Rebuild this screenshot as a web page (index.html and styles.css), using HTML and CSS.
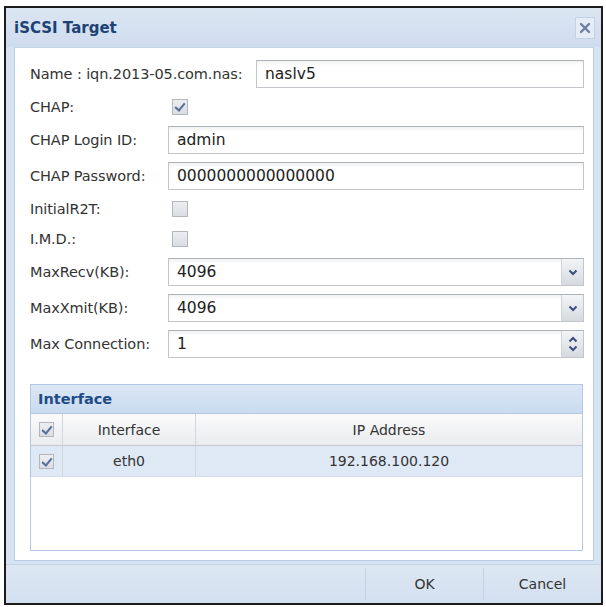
FILE: index.html
```html
<!DOCTYPE html>
<html lang="en">
<head>
    <meta charset="UTF-8">
    <title>iSCSI Target</title>
    <link rel="stylesheet" href="styles.css">
</head>
<body>
    <div class="dialog">
        <!-- Title bar -->
        <div class="titlebar">
            <span class="title">iSCSI Target</span>
            <span class="close">
                <svg width="12" height="12" viewBox="0 0 12 12"><path d="M2 2 L10 10 M10 2 L2 10" stroke="#6d7fa3" stroke-width="2.4" stroke-linecap="round"/></svg>
            </span>
        </div>

        <!-- Form body -->
        <div class="body">
            <div class="row">
                <label class="lbl lbl-wide">Name : iqn.2013-05.com.nas:</label>
                <div class="field">naslv5</div>
            </div>
            <div class="row check-row">
                <label class="lbl">CHAP:</label>
                <span class="cb checked"></span>
            </div>
            <div class="row">
                <label class="lbl">CHAP Login ID:</label>
                <div class="field">admin</div>
            </div>
            <div class="row">
                <label class="lbl">CHAP Password:</label>
                <div class="field">0000000000000000</div>
            </div>
            <div class="row check-row">
                <label class="lbl">InitialR2T:</label>
                <span class="cb"></span>
            </div>
            <div class="row check-row">
                <label class="lbl">I.M.D.:</label>
                <span class="cb"></span>
            </div>
            <div class="row">
                <label class="lbl">MaxRecv(KB):</label>
                <div class="field combo">
                    <span class="val">4096</span>
                    <span class="trigger">
                        <svg width="10" height="7" viewBox="0 0 10 7"><path d="M1.5 1.5 L5 5 L8.5 1.5" fill="none" stroke="#3c4f82" stroke-width="2"/></svg>
                    </span>
                </div>
            </div>
            <div class="row">
                <label class="lbl">MaxXmit(KB):</label>
                <div class="field combo">
                    <span class="val">4096</span>
                    <span class="trigger">
                        <svg width="10" height="7" viewBox="0 0 10 7"><path d="M1.5 1.5 L5 5 L8.5 1.5" fill="none" stroke="#3c4f82" stroke-width="2"/></svg>
                    </span>
                </div>
            </div>
            <div class="row">
                <label class="lbl">Max Connection:</label>
                <div class="field combo">
                    <span class="val">1</span>
                    <span class="spinner">
                        <svg width="10" height="7" viewBox="0 0 10 7"><path d="M1.5 5.5 L5 2 L8.5 5.5" fill="none" stroke="#3c4f82" stroke-width="2"/></svg>
                        <svg width="10" height="7" viewBox="0 0 10 7"><path d="M1.5 1.5 L5 5 L8.5 1.5" fill="none" stroke="#3c4f82" stroke-width="2"/></svg>
                    </span>
                </div>
            </div>

            <!-- Interface grid -->
            <div class="panel">
                <div class="panel-head">Interface</div>
                <div class="grid-row grid-head">
                    <div class="c-check"><span class="cb checked small"></span></div>
                    <div class="c-if">Interface</div>
                    <div class="c-ip">IP Address</div>
                </div>
                <div class="grid-row grid-sel">
                    <div class="c-check"><span class="cb checked small"></span></div>
                    <div class="c-if">eth0</div>
                    <div class="c-ip">192.168.100.120</div>
                </div>
            </div>
        </div>

        <!-- Buttons -->
        <div class="footer">
            <div class="btn">OK</div>
            <div class="btn">Cancel</div>
        </div>
    </div>
</body>
</html>
```

FILE: styles.css
```css
body {
    margin: 0;
    padding: 6px 3px 0 4px;
    background: #ffffff;
    font-family: 'DejaVu Sans', Verdana, sans-serif;
    font-size: 14.5px;
    color: #333333;
}

.dialog {
    width: 595px;
    height: 595px;
    border: 2px solid #1c1c1c;
    background: #d6e3f2;
    display: flex;
    flex-direction: column;
}

.titlebar {
    height: 39px;
    display: flex;
    align-items: center;
    justify-content: space-between;
    padding: 0 6px 0 8px;
    background: linear-gradient(#dbe6f3, #cfdcee);
}

.title {
    font-weight: bold;
    font-size: 15px;
    color: #1d4274;
}

.close {
    width: 18px;
    height: 20px;
    border: 1px solid #c3d2e5;
    background: #e4ecf6;
    display: flex;
    align-items: center;
    justify-content: center;
}

.body {
    flex: 1;
    margin: 0 7px 0 8px;
    background: #ffffff;
    border: 1px solid #b9cde5;
    border-top-color: #c7d7ea;
    padding: 8px 9px 0 15px;
}

.row {
    height: 36px;
    display: flex;
    align-items: center;
}

.check-row {
    height: 30px;
}

.lbl {
    width: 138px;
    flex-shrink: 0;
    letter-spacing: -0.1px;
}

.lbl-wide {
    width: 226px;
}

.field {
    flex: 1;
    height: 26px;
    line-height: 26px;
    border: 1px solid #c2c6cc;
    border-top-color: #aeb3ba;
    background: linear-gradient(#f2f2f2, #ffffff 5px);
    padding-left: 8px;
    color: #222222;
    font-size: 15.5px;
}

.combo {
    display: flex;
    padding-right: 0;
}

.combo .val {
    flex: 1;
}

.trigger,
.spinner {
    width: 21px;
    border-left: 1px solid #d0d4da;
    background: linear-gradient(#f3f4f6, #d6dae0);
    display: flex;
    flex-direction: column;
    align-items: center;
    justify-content: center;
    gap: 2px;
}

.cb {
    display: inline-block;
    width: 14px;
    height: 14px;
    margin-left: 4px;
    border: 1px solid #b3b7bd;
    background: linear-gradient(#eceef1, #dadde2);
    position: relative;
}

.cb.checked::after {
    content: "";
    position: absolute;
    left: 4px;
    top: 1px;
    width: 4px;
    height: 8px;
    border: solid #5a6c98;
    border-width: 0 2px 2px 0;
    transform: rotate(40deg);
}

.cb.small {
    width: 13px;
    height: 13px;
    margin-left: 0;
}

.panel {
    margin-top: 22px;
    margin-right: 1px;
    height: 165px;
    border: 1px solid #b4c8e2;
    background: #ffffff;
}

.panel-head {
    height: 28px;
    line-height: 28px;
    padding-left: 7px;
    font-weight: bold;
    font-size: 14.5px;
    color: #1f4b86;
    background: linear-gradient(#dbe7f5, #c9dbf0);
    border-bottom: 1px solid #b4c8e2;
}

.grid-row {
    display: flex;
    height: 30px;
    font-size: 14px;
    border-bottom: 1px solid #d3dbe6;
}

.grid-head {
    height: 31px;
    background: linear-gradient(#fbfbfb, #e9ebee);
    border-bottom-color: #c4c9d1;
}

.grid-sel {
    background: #dfe8f5;
}

.grid-row > div {
    display: flex;
    align-items: center;
    justify-content: center;
    border-right: 1px solid #d3d7dd;
}

.c-check {
    width: 31px;
}

.c-if {
    width: 132px;
}

.c-ip {
    flex: 1;
    border-right: none !important;
}

.footer {
    height: 38px;
    display: flex;
    justify-content: flex-end;
    align-items: center;
    background: linear-gradient(#dde7f3, #d3e0f0);
    border-top: 1px solid #c3d3e7;
    margin-top: 3px;
    padding-right: 0;
}

.btn {
    width: 117px;
    height: 32px;
    line-height: 32px;
    text-align: center;
    font-size: 14px;
    border-left: 1px solid #c4d2e3;
    color: #333333;
}
```
